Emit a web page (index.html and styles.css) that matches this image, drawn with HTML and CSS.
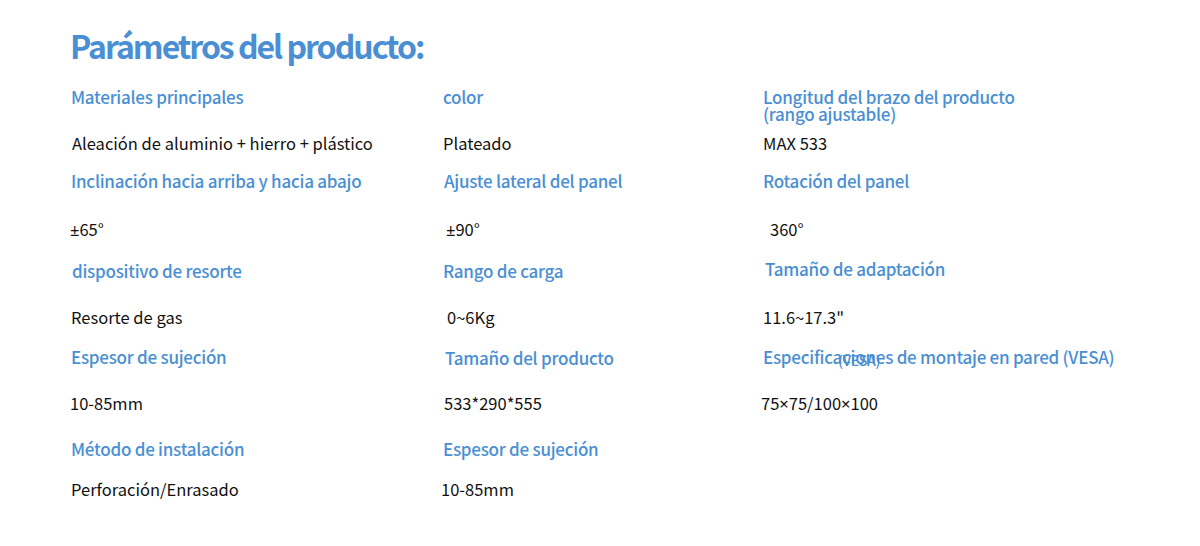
FILE: index.html
```html
<!DOCTYPE html>
<html lang="es">
<head>
<meta charset="utf-8">
<title>Parámetros del producto</title>
<link rel="stylesheet" href="styles.css">
</head>
<body>
<main class="page">
  <h1 class="title">Parámetros del producto:</h1>
  <section class="specs">
    <div class="label">Materiales principales</div>
    <div class="label">color</div>
    <div class="label label-two">Longitud del brazo del producto<br>(rango ajustable)</div>

    <div class="value shift-r1">Aleación de aluminio + hierro + plástico</div>
    <div class="value">Plateado</div>
    <div class="value">MAX 533</div>

    <div class="label">Inclinación hacia arriba y hacia abajo</div>
    <div class="label shift-r1">Ajuste lateral del panel</div>
    <div class="label">Rotación del panel</div>

    <div class="value shift-l1"><span class="sym">±</span>65°</div>
    <div class="value shift-r3"><span class="sym">±</span>90°</div>
    <div class="value shift-r7">360°</div>

    <div class="label shift-r1">dispositivo de resorte</div>
    <div class="label">Rango de carga</div>
    <div class="label shift-r2 shift-up">Tamaño de adaptación</div>

    <div class="value">Resorte de gas</div>
    <div class="value shift-r4">0~6Kg</div>
    <div class="value">11.6~17.3"</div>

    <div class="label">Espesor de sujeción</div>
    <div class="label shift-r2 shift-down">Tamaño del producto</div>
    <div class="label vesa">Especificaciones de montaje en pared (VESA)<span class="vesa-ghost">(VESA)</span></div>

    <div class="value shift-l1">10-85mm</div>
    <div class="value shift-r1">533*290*555</div>
    <div class="value shift-l2">75<span class="sym">×</span>75/100<span class="sym">×</span>100</div>

    <div class="label">Método de instalación</div>
    <div class="label">Espesor de sujeción</div>
    <div class="label"></div>

    <div class="value">Perforación/Enrasado</div>
    <div class="value shift-l2">10-85mm</div>
    <div class="value"></div>
  </section>
</main>
</body>
</html>
```

FILE: styles.css
```css
html, body {
  margin: 0;
  padding: 0;
  background: #ffffff;
}

.page {
  width: 1200px;
  height: 546px;
  padding-left: 70px;
  box-sizing: border-box;
  font-family: "Noto Sans CJK SC", "Noto Sans", sans-serif;
  overflow: hidden;
}

.title {
  margin: 0;
  padding-top: 25px;
  height: 62px;
  font-size: 32px;
  line-height: 40px;
  font-weight: 700;
  letter-spacing: -2px;
  color: #4a8fd3;
}

.specs {
  display: grid;
  grid-template-columns: 372px 320px 1fr;
  grid-template-rows: 47px 37px 49px 41px 47px 39px 47px 45px 41px 20px;
  margin-left: 1px;
}

.label {
  font-size: 17px;
  line-height: 20px;
  font-weight: 500;
  color: #4a8fd3;
  letter-spacing: -0.25px;
  white-space: nowrap;
  position: relative;
}

.label-two {
  line-height: 17px;
  margin-top: 1px;
}

.value {
  font-size: 16.5px;
  line-height: 20px;
  color: #111111;
  white-space: nowrap;
  margin-top: -1px;
}

.sym {
  font-family: "Noto Sans", sans-serif;
}

.shift-r1 { padding-left: 1px; }
.shift-r2 { padding-left: 2px; }
.shift-r3 { padding-left: 3px; }
.shift-r4 { padding-left: 4px; }
.shift-r7 { padding-left: 7px; }
.shift-l1 { margin-left: -1px; }
.shift-l2 { margin-left: -2px; }
.shift-up { margin-top: -2px; }
.shift-down { margin-top: 1px; }

.vesa-ghost {
  position: absolute;
  left: 75px;
  top: 3px;
  font-size: 14px;
  letter-spacing: -0.3px;
}
```
